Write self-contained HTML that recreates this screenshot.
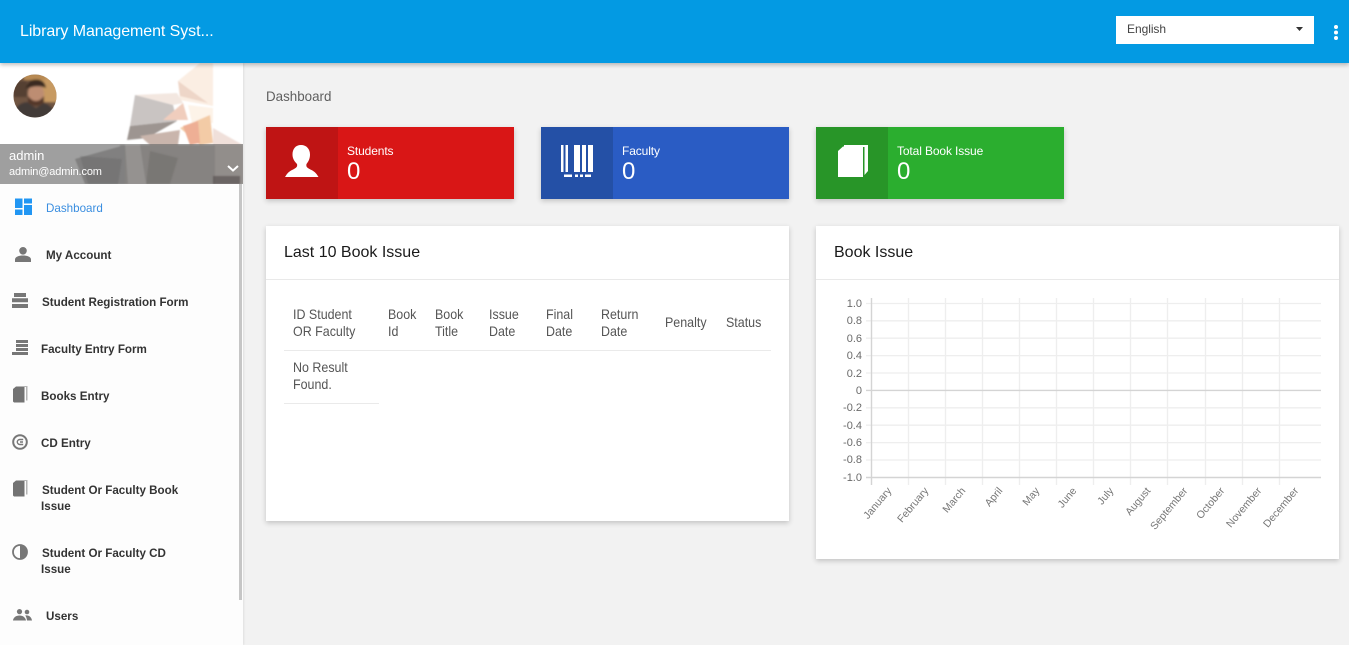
<!DOCTYPE html>
<html><head><meta charset="utf-8"><title>Dashboard</title>
<style>
*{box-sizing:border-box}
html,body{margin:0;width:1349px;height:645px;overflow:hidden;background:#f2f2f2;font-family:"Liberation Sans",Arial,sans-serif}
.a{position:absolute}
.t{position:absolute;white-space:nowrap}
#hd{left:0;top:0;width:1349px;height:63px;background:#039ae3;box-shadow:0 2px 4px rgba(0,0,0,.25);z-index:5}
#sb{left:0;top:63px;width:243px;height:582px;background:#fdfdfd;box-shadow:1px 0 2px rgba(0,0,0,.08);z-index:3;overflow:hidden}
.m{position:absolute;font-size:12px;font-weight:bold;color:#333;line-height:16px;white-space:nowrap;transform:scaleX(.968);transform-origin:0 0}
.card{position:absolute;background:#fff;box-shadow:0 2px 5px rgba(0,0,0,.2)}
.tile{position:absolute;top:127px;width:248px;height:72px;box-shadow:0 2px 5px rgba(0,0,0,.2);color:#fff}
.tile .d{position:absolute;left:0;top:0;width:72px;height:72px}
.tile .l{position:absolute;left:81px;top:17px;font-size:12px;line-height:14px;white-space:nowrap;letter-spacing:-.12px}
.tile .n{position:absolute;left:81px;top:31px;font-size:24px;line-height:28px}
.th{position:absolute;font-size:14px;line-height:17px;color:#555;white-space:nowrap;transform:scaleX(.89);transform-origin:0 0}
.ct{position:absolute;left:18px;top:17px;font-size:16px;line-height:20px;color:#1a1a1a;white-space:nowrap}
.hr{position:absolute;left:0;top:53px;width:100%;height:1px;background:#e9e9e9}
</style></head><body>
<div id="hd" class="a">
  <div class="t" style="left:20px;top:22px;font-size:16px;line-height:20px;color:#fff;letter-spacing:-.08px">Library Management Syst...</div>
  <div class="a" style="left:1116px;top:16px;width:198px;height:28px;background:#fff">
    <div class="t" style="left:11px;top:6px;font-size:12px;line-height:15px;color:#444;letter-spacing:-.05px">English</div>
    <svg class="a" style="left:180px;top:10px" width="8" height="6"><path d="M0 1h7L3.500 5z" fill="#333"/></svg>
  </div>
  <svg class="a" style="left:1333px;top:25px" width="6" height="15"><circle cx="3" cy="2" r="2" fill="#fff"/><circle cx="3" cy="7.500" r="2" fill="#fff"/><circle cx="3" cy="13" r="2" fill="#fff"/></svg>
</div>
<div id="sb" class="a">
  <svg class="a" style="left:0;top:0" width="243" height="121" viewBox="0 0 243 121">
    <defs>
      <clipPath id="cc"><circle cx="35" cy="33" r="21.500"/></clipPath>
      <filter id="bl" x="-5%" y="-5%" width="110%" height="110%"><feGaussianBlur stdDeviation=".7"/></filter>
      <filter id="b2" x="-10%" y="-10%" width="120%" height="120%"><feGaussianBlur stdDeviation="1"/></filter>
    </defs>
    <rect width="243" height="121" fill="#fff"/>
    <g filter="url(#bl)">
      <polygon points="178,18 200,0 213,0 213,43 180,37" fill="#fbeee3"/>
      <polygon points="178,18 208,40 180,33" fill="#eed6c8"/>
      <polygon points="135,32 177,30 183,40 173,42" fill="#f3e7e0"/>
      <polygon points="135,32 173,42 177,58 130,63" fill="#c9c4c2"/>
      <polygon points="163,57 183,40 188,57" fill="#f0cdbd"/>
      <polygon points="130,63 177,58 147,75 127,77" fill="#9d9591"/>
      <polygon points="188,42 213,45 213,60 192,60" fill="#fdf3e8"/>
      <polygon points="180,65 210,52 213,80 200,82" fill="#f3cba6"/>
      <polygon points="183,63 198,58 200,80 190,82" fill="#eeaf95"/>
      <polygon points="213,65 243,82 213,82" fill="#f0e0da"/>
      <polygon points="140,73 180,67 178,82 150,82" fill="#c9b5ac"/>
      <polygon points="120,82 215,82 215,121 120,121" fill="#b5aca6"/>
      <polygon points="215,82 243,82 243,121 215,121" fill="#d9ccc4"/>
      <polygon points="75,96 125,82 125,121 85,121" fill="#a6a4a3"/>
    </g>
    <rect y="81" width="243" height="40" fill="#6e6e6e" fill-opacity=".66"/>
    <g filter="url(#bl)">
      <polygon points="80,93 122,96 118,121 88,121" fill="#5a5958" fill-opacity=".28"/>
      <polygon points="125,81 140,81 146,121 128,121" fill="#fff" fill-opacity=".12"/>
      <polygon points="150,88 178,95 170,121 146,121" fill="#5a5552" fill-opacity=".28"/>
      <polygon points="213,113 240,113 240,121 213,121" fill="#4a4644" fill-opacity=".55"/>
    </g>
    <circle cx="35" cy="33" r="21.500" fill="#8d6a4f"/>
    <g clip-path="url(#cc)">
      <g filter="url(#b2)">
        <rect x="13" y="11" width="44" height="44" fill="#6f5443"/>
        <rect x="38" y="11" width="20" height="28" fill="#c79a62"/>
        <rect x="24" y="11" width="22" height="6" fill="#b88a52"/>
        <rect x="13" y="18" width="14" height="16" fill="#553f33"/>
        <ellipse cx="36" cy="31" rx="8" ry="10.500" fill="#bd8d72"/>
        <path d="M26 26q1-10 11-9.500 8 .5 9 8.500-9-4-20 1z" fill="#3a2a22"/>
        <path d="M28 33q8 10 16 0v7q-8 6-16 0z" fill="#55392b"/>
        <path d="M13 56q1-16 14-17l9 6 8-5q11 3 12 16z" fill="#423b38"/>
      </g>
    </g>
    <path d="M228 103l5 4.500 5-4.500" fill="none" stroke="#fff" stroke-width="2"/>
  </svg>
  <div class="t" style="left:9px;top:85px;font-size:13px;line-height:16px;color:#fff">admin</div>
  <div class="t" style="left:9px;top:102px;font-size:11px;line-height:14px;color:#fff;letter-spacing:-.14px">admin@admin.com</div>
  <div class="a" style="left:239px;top:121px;width:3px;height:416px;background:#c6c6c6"></div>

  <svg class="a" style="left:15px;top:135px" width="17" height="17"><path d="M0 .5h7.500v9.500H0zM9 .5h8V5.500H9zM9 7h8v10H9zM0 11.500h7.500V17H0z" fill="#2196f3"/></svg>
  <div class="m" style="left:46px;top:137px;color:#3a8ee0;font-weight:normal">Dashboard</div>

  <svg class="a" style="left:15px;top:184px" width="16" height="16"><circle cx="8" cy="3.800" r="3.800" fill="#777"/><path d="M0 15v-2.500C0 9.800 4 8.500 8 8.500s8 1.300 8 4V15z" fill="#777"/></svg>
  <div class="m" style="left:46px;top:184px">My Account</div>

  <svg class="a" style="left:12px;top:230px" width="16" height="15"><path d="M2 0h12v4H2zM0 5.200h16v4H0zM0 11h16v4H0z" fill="#777"/></svg>
  <div class="m" style="left:42px;top:231px">Student Registration Form</div>

  <svg class="a" style="left:12px;top:277px" width="16" height="15"><path d="M4 0h12v3H4zM4 4h12v3H4zM4 8h12v3H4zM0 12h16v3H0z" fill="#777"/></svg>
  <div class="m" style="left:41px;top:278px">Faculty Entry Form</div>

  <svg class="a" style="left:13px;top:323px" width="15" height="17"><path d="M0 3l3-2.500h8.500V16.500H1l-1-1z" fill="#737373"/><path d="M3 .5l9 -.5h2.500V1H12zM13 1h1.500v13.500H13z" fill="#b5b5b5"/></svg>
  <div class="m" style="left:41px;top:325px">Books Entry</div>

  <svg class="a" style="left:12px;top:371px" width="16" height="16"><circle cx="8" cy="8" r="6.800" fill="none" stroke="#777" stroke-width="2"/><path d="M11.200 5.500H7.800a2.500 2.500 0 0 0 0 5h3.400M8 8h3" fill="none" stroke="#777" stroke-width="1.400"/></svg>
  <div class="m" style="left:41px;top:372px">CD Entry</div>

  <svg class="a" style="left:13px;top:417px" width="15" height="17"><path d="M0 3l3-2.500h8.500V16.500H1l-1-1z" fill="#737373"/><path d="M3 .5l9 -.5h2.500V1H12zM13 1h1.500v13.500H13z" fill="#b5b5b5"/></svg>
  <div class="m" style="left:42px;top:419px">Student Or Faculty Book</div>
  <div class="m" style="left:41px;top:435px">Issue</div>

  <svg class="a" style="left:12px;top:481px" width="16" height="16"><circle cx="8" cy="8" r="7" fill="none" stroke="#777" stroke-width="1.800"/><path d="M8 1a7 7 0 0 1 0 14z" fill="#777"/></svg>
  <div class="m" style="left:42px;top:482px">Student Or Faculty CD</div>
  <div class="m" style="left:41px;top:498px">Issue</div>

  <svg class="a" style="left:13px;top:546px" width="20" height="12"><circle cx="6.500" cy="2.600" r="2.600" fill="#777"/><circle cx="14" cy="3" r="2.300" fill="#777"/><path d="M0 11.500c.3-3 3-5 6.500-5s6 2 6.500 5zM14 11.500c-.2-2-.7-3.500-1.700-5 3-.8 6.200 1.200 6.700 5z" fill="#777"/></svg>
  <div class="m" style="left:46px;top:545px">Users</div>
</div>

<div class="t" style="left:266px;top:88px;font-size:14px;line-height:17px;color:#5f5f5f;transform:scaleX(.955);transform-origin:0 0">Dashboard</div>

<div class="tile" style="left:266px;background:#d91616">
  <div class="d" style="background:#bf1414"></div>
  <svg class="a" style="left:18px;top:18px" width="36" height="34"><path d="M17 0c5.500 0 9 4 9 9.500 0 4-1.500 7-3.500 9.500-.5 2 0 3.500 3 5 3 1.500 6 3 8 6.500l1 1.500H1l1-1.500c2-3.500 5-5 8-6.500 3-1.500 3.500-3 3-5-2.500-2.500-4.500-5.500-4.500-9.500C8.500 4 11.500 0 17 0z" fill="#fff"/></svg>
  <div class="l">Students</div><div class="n">0</div>
</div>
<div class="tile" style="left:541px;background:#2a5cc4">
  <div class="d" style="background:#2450a6"></div>
  <svg class="a" style="left:20px;top:18px" width="33" height="33"><path d="M0 0h2.500v27H0zM4.500 0h2.500v27H4.500zM13 0h6v27h-6zM21 0h4v27h-4zM27 0h5v27h-5z" fill="#fff"/><path d="M3 29.500h8V32H3zM14 29.500h3V32h-3zM19 29.500h3V32h-3zM24 29.500h6V32h-6z" fill="#fff"/></svg>
  <div class="l">Faculty</div><div class="n">0</div>
</div>
<div class="tile" style="left:816px;background:#2bae2f">
  <div class="d" style="background:#289528"></div>
  <svg class="a" style="left:22px;top:18px" width="31" height="33"><path d="M0 6l5-4.500h20V32H0z" fill="#fff"/><path d="M6 0h24v26l-3.500 4V2H6z" fill="#fff"/></svg>
  <div class="l">Total Book Issue</div><div class="n">0</div>
</div>

<div class="card" style="left:266px;top:226px;width:523px;height:295px">
  <div class="ct">Last 10 Book Issue</div><div class="hr"></div>
  <div class="th" style="left:27px;top:80px">ID Student<br>OR Faculty</div>
  <div class="th" style="left:122px;top:80px">Book<br>Id</div>
  <div class="th" style="left:169px;top:80px">Book<br>Title</div>
  <div class="th" style="left:223px;top:80px">Issue<br>Date</div>
  <div class="th" style="left:280px;top:80px">Final<br>Date</div>
  <div class="th" style="left:335px;top:80px">Return<br>Date</div>
  <div class="th" style="left:399px;top:88px">Penalty</div>
  <div class="th" style="left:460px;top:88px">Status</div>
  <div class="a" style="left:18px;top:124px;width:487px;height:1px;background:#eaeaea"></div>
  <div class="th" style="left:27px;top:133px">No Result<br>Found.</div>
  <div class="a" style="left:18px;top:177px;width:95px;height:1px;background:#eaeaea"></div>
</div>

<div class="card" style="left:816px;top:226px;width:523px;height:333px">
  <div class="ct">Book Issue</div><div class="hr"></div>
</div>
<svg class="a" style="left:816px;top:226px" width="523" height="333" viewBox="816 226 523 333" font-family="Liberation Sans, Arial, sans-serif" font-size="11" fill="#6a6a6a">
  <g stroke="#eeeeee" stroke-width="1.300" fill="none">
    <path d="M866 303.500H1321M866 320.800H1321M866 338.200H1321M866 355.600H1321M866 373H1321M866 407.800H1321M866 425.200H1321M866 442.600H1321M866 460H1321"/>
    <path d="M908.500 298V485M945.500 298V485M982.500 298V485M1019.500 298V485M1056.500 298V485M1093.500 298V485M1130.500 298V485M1167.500 298V485M1205.500 298V485M1242.500 298V485M1279.500 298V485"/>
  </g>
  <path d="M866 390.400H1321M866 477.500H1321M871.500 298V485" stroke="#d4d4d4" stroke-width="1.400" fill="none"/>
  <g text-anchor="end">
    <text x="862" y="307">1.0</text><text x="862" y="324">0.8</text><text x="862" y="342">0.6</text><text x="862" y="359">0.4</text><text x="862" y="377">0.2</text><text x="862" y="394">0</text><text x="862" y="411">-0.2</text><text x="862" y="429">-0.4</text><text x="862" y="446">-0.6</text><text x="862" y="463">-0.8</text><text x="862" y="481">-1.0</text>
    <g font-size="10.500" fill="#777">
      <text transform="translate(892 491) rotate(-50)">January</text>
      <text transform="translate(929 491) rotate(-50)">February</text>
      <text transform="translate(966 491) rotate(-50)">March</text>
      <text transform="translate(1003 491) rotate(-50)">April</text>
      <text transform="translate(1040 491) rotate(-50)">May</text>
      <text transform="translate(1077 491) rotate(-50)">June</text>
      <text transform="translate(1114 491) rotate(-50)">July</text>
      <text transform="translate(1151 491) rotate(-50)">August</text>
      <text transform="translate(1188 491) rotate(-50)">September</text>
      <text transform="translate(1225 491) rotate(-50)">October</text>
      <text transform="translate(1262 491) rotate(-50)">November</text>
      <text transform="translate(1299 491) rotate(-50)">December</text>
    </g>
  </g>
</svg>
</body></html>
